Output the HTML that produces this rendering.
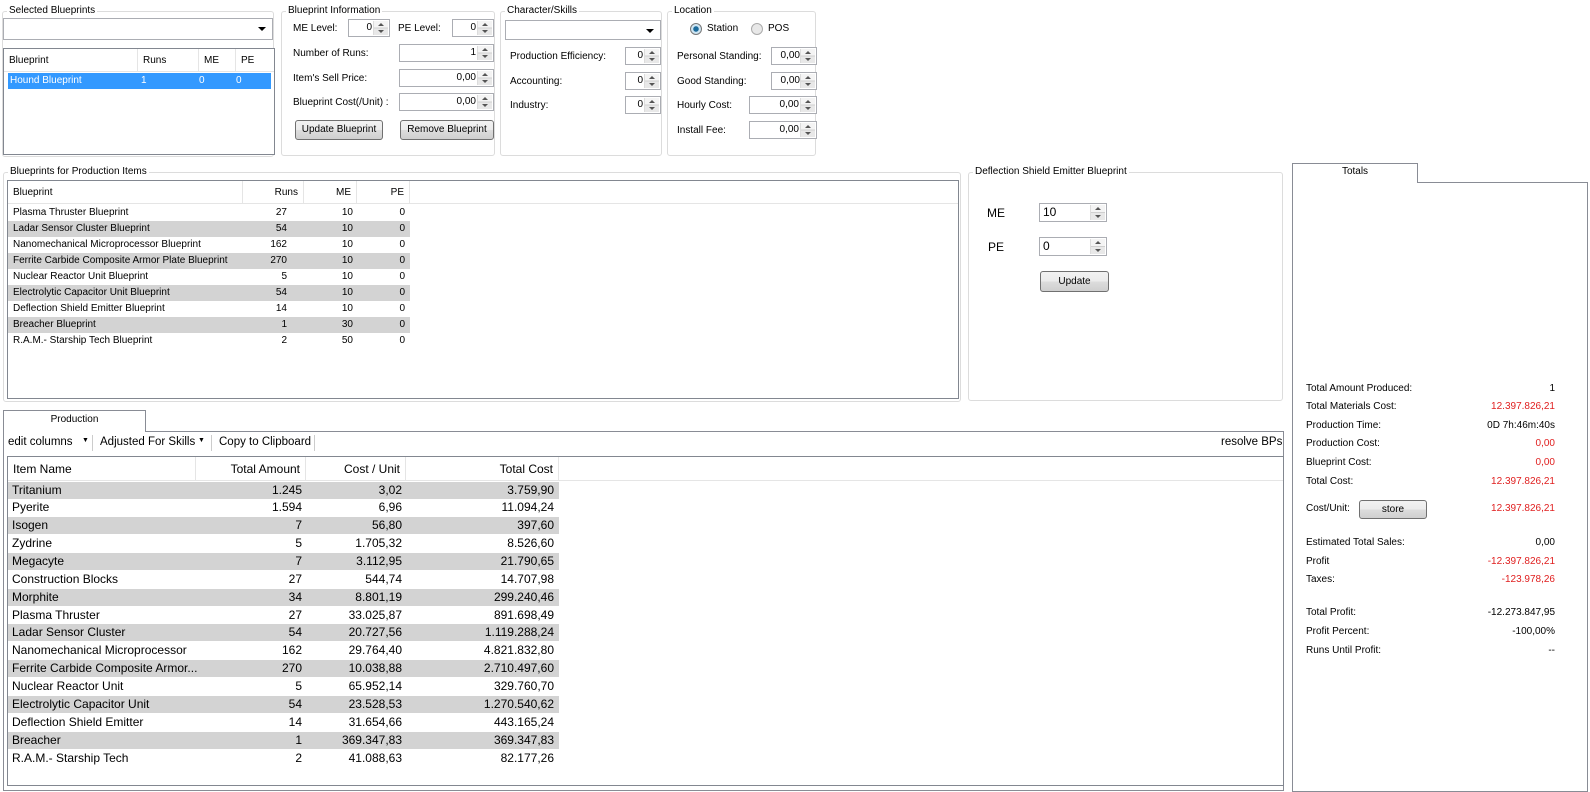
<!DOCTYPE html>
<html><head><meta charset="utf-8"><style>
*{box-sizing:border-box;margin:0;padding:0}
body{width:1590px;height:785px;background:#fff;font-family:"Liberation Sans",sans-serif;font-size:10px;color:#000;position:relative;overflow:hidden}
.a{position:absolute;white-space:nowrap}
.g{position:absolute;border:1px solid #dcdcdc;border-radius:3px}
.gt{position:absolute;background:#fff;padding:0 2px;font-size:10px;top:-7px;left:4px}
.box{position:absolute;border:1px solid #abadb3;background:#fff}
.lb{position:absolute;border:1px solid #828790;background:#fff}
.sp{position:absolute;border:1px solid #abadb3;background:#fff;text-align:right;padding-right:17px;line-height:16px}
.sp:after{content:"";position:absolute;right:1px;top:1px;width:14px;bottom:1px;background:linear-gradient(#f4f4f4 0 47%,#cfcfcf 47% 53%,#e8e8e8 53%);border-left:1px solid #dcdcdc}
.sp i{position:absolute;right:5px;width:0;height:0;border-left:3px solid transparent;border-right:3px solid transparent;z-index:2}
.sp i.u{top:3px;border-bottom:3px solid #555}
.sp i.d{bottom:3px;border-top:3px solid #555}
.btn{position:absolute;border:1px solid #707070;border-radius:3px;background:linear-gradient(#f2f2f2,#ebebeb 50%,#dddddd 50%,#cfcfcf);text-align:center;font-size:10px}
.hd{position:absolute;height:23px;background:#fff;border-bottom:1px solid #e5e5e5}
.hc{position:absolute;top:0;height:23px;line-height:23px;border-right:1px solid #e5e5e5;padding:0 5px}
.r{text-align:right}
.red{color:#e02020}
.cb:after{content:"";position:absolute;right:6px;top:8px;border-left:4px solid transparent;border-right:4px solid transparent;border-top:4px solid #000}
.tb{font-size:11.5px}
</style></head><body>

<!-- Selected Blueprints -->
<div class="g" style="left:2px;top:11px;width:272px;height:146px"><div class="gt" style="left:4px">Selected Blueprints</div></div>
<div class="box cb" style="left:3px;top:18px;width:270px;height:22px"></div>
<div class="lb" style="left:3px;top:48px;width:272px;height:107px">
 <div class="hd" style="left:0;top:0;width:270px">
  <div class="hc" style="left:0;width:134px">Blueprint</div>
  <div class="hc" style="left:134px;width:61px">Runs</div>
  <div class="hc" style="left:195px;width:37px">ME</div>
  <div class="hc" style="left:232px;width:38px;border:none">PE</div>
 </div>
 <div class="a" style="left:4px;top:24px;width:263px;height:16px;background:#3399ff;color:#fff;line-height:16px">
  <span class="a" style="left:2px">Hound Blueprint</span><span class="a" style="left:133px">1</span><span class="a" style="left:191px">0</span><span class="a" style="left:228px">0</span>
 </div>
</div>

<!-- Blueprint Information -->
<div class="g" style="left:281px;top:11px;width:214px;height:145px"><div class="gt">Blueprint Information</div></div>
<div class="a" style="left:293px;top:23px">ME Level:</div>
<div class="sp" style="left:348px;top:19px;width:42px;height:18px">0<i class="u"></i><i class="d"></i></div>
<div class="a" style="left:398px;top:23px">PE Level:</div>
<div class="sp" style="left:452px;top:19px;width:42px;height:18px">0<i class="u"></i><i class="d"></i></div>
<div class="a" style="left:293px;top:48px">Number of Runs:</div>
<div class="sp" style="left:399px;top:44px;width:95px;height:18px">1<i class="u"></i><i class="d"></i></div>
<div class="a" style="left:293px;top:73px">Item's Sell Price:</div>
<div class="sp" style="left:399px;top:69px;width:95px;height:18px">0,00<i class="u"></i><i class="d"></i></div>
<div class="a" style="left:293px;top:97px">Blueprint Cost(/Unit) :</div>
<div class="sp" style="left:399px;top:93px;width:95px;height:18px">0,00<i class="u"></i><i class="d"></i></div>
<div class="btn" style="left:295px;top:120px;width:88px;height:20px;line-height:18px">Update Blueprint</div>
<div class="btn" style="left:400px;top:120px;width:94px;height:20px;line-height:18px">Remove Blueprint</div>

<!-- Character/Skills -->
<div class="g" style="left:500px;top:11px;width:162px;height:145px"><div class="gt">Character/Skills</div></div>
<div class="box cb" style="left:505px;top:20px;width:156px;height:20px"></div>
<div class="a" style="left:510px;top:51px">Production Efficiency:</div>
<div class="sp" style="left:625px;top:47px;width:36px;height:18px">0<i class="u"></i><i class="d"></i></div>
<div class="a" style="left:510px;top:76px">Accounting:</div>
<div class="sp" style="left:625px;top:72px;width:36px;height:18px">0<i class="u"></i><i class="d"></i></div>
<div class="a" style="left:510px;top:100px">Industry:</div>
<div class="sp" style="left:625px;top:96px;width:36px;height:18px">0<i class="u"></i><i class="d"></i></div>

<!-- Location -->
<div class="g" style="left:667px;top:11px;width:149px;height:145px"><div class="gt">Location</div></div>
<div class="a" style="left:690px;top:23px;width:12px;height:12px;border-radius:50%;border:1px solid #777;background:radial-gradient(#1c6b9c 0 2.5px,#cfe6f3 3px)"></div>
<div class="a" style="left:707px;top:23px">Station</div>
<div class="a" style="left:751px;top:23px;width:12px;height:12px;border-radius:50%;border:1px solid #aaa;background:#e8e8e8"></div>
<div class="a" style="left:768px;top:23px">POS</div>
<div class="a" style="left:677px;top:51px">Personal Standing:</div>
<div class="sp" style="left:771px;top:47px;width:46px;height:18px;padding-right:16px">0,00<i class="u"></i><i class="d"></i></div>
<div class="a" style="left:677px;top:76px">Good Standing:</div>
<div class="sp" style="left:771px;top:72px;width:46px;height:18px;padding-right:16px">0,00<i class="u"></i><i class="d"></i></div>
<div class="a" style="left:677px;top:100px">Hourly Cost:</div>
<div class="sp" style="left:749px;top:96px;width:68px;height:18px">0,00<i class="u"></i><i class="d"></i></div>
<div class="a" style="left:677px;top:125px">Install Fee:</div>
<div class="sp" style="left:749px;top:121px;width:68px;height:18px">0,00<i class="u"></i><i class="d"></i></div>

<!-- Blueprints for Production Items -->
<div class="g" style="left:3px;top:172px;width:958px;height:230px"><div class="gt">Blueprints for Production Items</div></div>
<div class="lb" style="left:7px;top:180px;width:952px;height:219px">
 <div class="hd" style="left:0;top:0;width:950px">
  <div class="hc" style="left:0;width:235px">Blueprint</div>
  <div class="hc r" style="left:235px;width:61px">Runs</div>
  <div class="hc r" style="left:296px;width:53px">ME</div>
  <div class="hc r" style="left:349px;width:53px">PE</div>
 </div>
 <div id="bp"></div>
</div>

<!-- Deflection -->
<div class="g" style="left:968px;top:172px;width:315px;height:229px"><div class="gt">Deflection Shield Emitter Blueprint</div></div>
<div class="a" style="left:987px;top:206px;font-size:12px">ME</div>
<div class="box" style="left:1039px;top:203px;width:68px;height:19px;line-height:17px;padding-left:3px;font-size:12px">10</div>
<div class="sp" style="left:1091px;top:203px;width:16px;height:19px;border-left:none;padding:0"><i class="u"></i><i class="d"></i></div>
<div class="a" style="left:988px;top:240px;font-size:12px">PE</div>
<div class="box" style="left:1039px;top:237px;width:68px;height:19px;line-height:17px;padding-left:3px;font-size:12px">0</div>
<div class="sp" style="left:1091px;top:237px;width:16px;height:19px;border-left:none;padding:0"><i class="u"></i><i class="d"></i></div>
<div class="btn" style="left:1040px;top:271px;width:69px;height:21px;line-height:19px">Update</div>

<!-- Totals -->
<div class="a" style="left:1292px;top:163px;width:126px;height:20px;border:1px solid #898c95;border-bottom:none;background:#fff;text-align:center;line-height:16px;z-index:2">Totals</div>
<div class="a" style="left:1292px;top:182px;width:296px;height:610px;border:1px solid #898c95;background:#fff"></div>
<div id="tot"></div>
<div class="btn" style="left:1359px;top:500px;width:68px;height:19px;line-height:17px">store</div>

<!-- Production -->
<div class="a" style="left:3px;top:410px;width:143px;height:22px;border:1px solid #898c95;border-bottom:none;background:#fff;text-align:center;line-height:18px;z-index:2">Production</div>
<div class="a" style="left:3px;top:431px;width:1281px;height:360px;border:1px solid #898c95;background:#fff"></div>
<div class="a tb" style="left:8px;top:436px">edit columns</div>
<div class="a" style="left:82px;top:437px;font-size:7px">▼</div>
<div class="a" style="left:92px;top:435px;width:1px;height:16px;background:#ccc"></div>
<div class="a tb" style="left:100px;top:436px">Adjusted For Skills</div>
<div class="a" style="left:198px;top:437px;font-size:7px">▼</div>
<div class="a" style="left:211px;top:435px;width:1px;height:16px;background:#ccc"></div>
<div class="a tb" style="left:219px;top:436px">Copy to Clipboard</div>
<div class="a" style="left:314px;top:435px;width:1px;height:16px;background:#ccc"></div>
<div class="a tb" style="left:1221px;top:436px">resolve BPs</div>
<div class="lb" style="left:7px;top:456px;width:1277px;height:330px;font-size:12px">
 <div class="hd" style="left:0;top:0;width:1275px;height:24px">
  <div class="hc" style="left:0;width:188px;height:24px;line-height:24px">Item Name</div>
  <div class="hc r" style="left:188px;width:110px;height:24px;line-height:24px">Total Amount</div>
  <div class="hc r" style="left:298px;width:100px;height:24px;line-height:24px">Cost / Unit</div>
  <div class="hc r" style="left:398px;width:153px;height:24px;line-height:24px">Total Cost</div>
 </div>
 <div id="pr"></div>
</div>

<script>
var bp=[["Plasma Thruster Blueprint",27,10,0],["Ladar Sensor Cluster Blueprint",54,10,0],["Nanomechanical Microprocessor Blueprint",162,10,0],["Ferrite Carbide Composite Armor Plate Blueprint",270,10,0],["Nuclear Reactor Unit Blueprint",5,10,0],["Electrolytic Capacitor Unit Blueprint",54,10,0],["Deflection Shield Emitter Blueprint",14,10,0],["Breacher Blueprint",1,30,0],["R.A.M.- Starship Tech Blueprint",2,50,0]];
var h="";bp.forEach(function(r,i){var t=24+i*16;h+='<div class="a" style="left:0;top:'+t+'px;width:402px;height:16px;line-height:16px;'+(i%2?'background:#d3d3d3':'')+'"><span class="a" style="left:5px">'+r[0]+'</span><span class="a" style="right:123px">'+r[1]+'</span><span class="a" style="right:57px">'+r[2]+'</span><span class="a" style="right:5px">'+r[3]+'</span></div>'});
document.getElementById("bp").innerHTML=h;
var pr=[["Tritanium","1.245","3,02","3.759,90"],["Pyerite","1.594","6,96","11.094,24"],["Isogen","7","56,80","397,60"],["Zydrine","5","1.705,32","8.526,60"],["Megacyte","7","3.112,95","21.790,65"],["Construction Blocks","27","544,74","14.707,98"],["Morphite","34","8.801,19","299.240,46"],["Plasma Thruster","27","33.025,87","891.698,49"],["Ladar Sensor Cluster","54","20.727,56","1.119.288,24"],["Nanomechanical Microprocessor","162","29.764,40","4.821.832,80"],["Ferrite Carbide Composite Armor...","270","10.038,88","2.710.497,60"],["Nuclear Reactor Unit","5","65.952,14","329.760,70"],["Electrolytic Capacitor Unit","54","23.528,53","1.270.540,62"],["Deflection Shield Emitter","14","31.654,66","443.165,24"],["Breacher","1","369.347,83","369.347,83"],["R.A.M.- Starship Tech","2","41.088,63","82.177,26"]];
h="";pr.forEach(function(r,i){var t=24.5+i*17.87;h+='<div class="a" style="left:0;top:'+t+'px;width:551px;height:17px;line-height:17px;'+(i%2?'':'background:#d3d3d3')+'"><span class="a" style="left:4px">'+r[0]+'</span><span class="a" style="right:257px">'+r[1]+'</span><span class="a" style="right:157px">'+r[2]+'</span><span class="a" style="right:5px">'+r[3]+'</span></div>'});
document.getElementById("pr").innerHTML=h;
var tt=[["Total Amount Produced:","1",389,0],["Total Materials Cost:","12.397.826,21",407,1],["Production Time:","0D 7h:46m:40s",426,0],["Production Cost:","0,00",444,1],["Blueprint Cost:","0,00",463,1],["Total Cost:","12.397.826,21",482,1],["Cost/Unit:","12.397.826,21",509,1],["Estimated Total Sales:","0,00",543,0],["Profit","-12.397.826,21",562,1],["Taxes:","-123.978,26",580,1],["Total Profit:","-12.273.847,95",613,0],["Profit Percent:","-100,00%",632,0],["Runs Until Profit:","--",651,0]];
h="";tt.forEach(function(r){h+='<div class="a" style="left:1306px;top:'+(r[2]-6)+'px">'+r[0]+'</div><div class="a'+(r[3]?' red':'')+'" style="right:35px;top:'+(r[2]-6)+'px">'+r[1]+'</div>'});
document.getElementById("tot").innerHTML=h;
</script>
</body></html>
